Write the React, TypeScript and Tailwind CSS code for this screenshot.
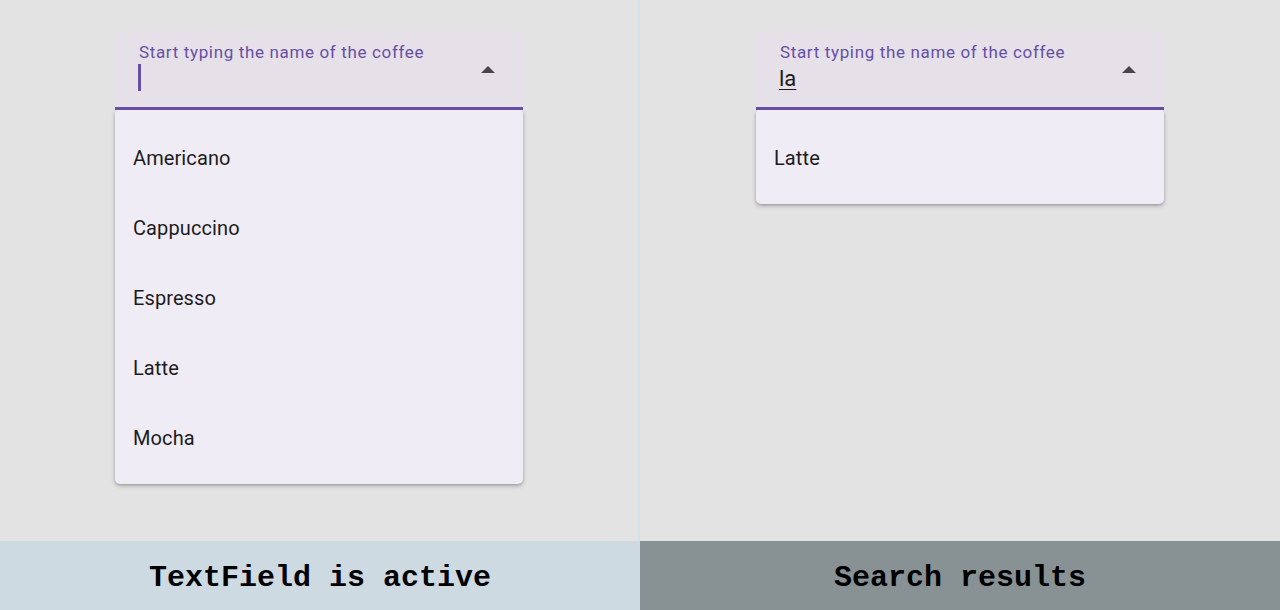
import React from "react";

const Arrow = () => (
  <svg width="14" height="7" viewBox="0 0 14 7" className="block">
    <path d="M0 7 L7 0 L14 7 Z" fill="#49454f" />
  </svg>
);

function Field({ value }: { value?: string }) {
  return (
    <div className="relative h-[80px] w-[408px] rounded-t-[5px] border-b-[3px] border-[#6750a4] bg-[#e6e0e9]">
      <div className="pl-[24px] pt-[11px] text-[17px] leading-[22px] tracking-[0.65px] text-[#6750a4]">
        Start typing the name of the coffee
      </div>
      {value ? (
        <div className="pl-[23px] pt-[3px] text-[22px] leading-[26px] text-[#1d1b20] underline decoration-1 underline-offset-[3px]">
          {value}
        </div>
      ) : (
        <div className="ml-[23px] mt-[1px] h-[27px] w-[3px] bg-[#6750a4]" />
      )}
      <div className="absolute right-[28px] top-[36px]">
        <Arrow />
      </div>
    </div>
  );
}

function Menu({ items }: { items: string[] }) {
  return (
    <div className="w-[408px] rounded-b-[5px] rounded-t-[3px] bg-[#f0ecf6] pb-[11px] pt-[13px] shadow-[0_2px_4px_rgba(0,0,0,0.25),0_1px_2px_rgba(0,0,0,0.1)]">
      {items.map((it) => (
        <div
          key={it}
          className="flex h-[70px] items-center pl-[18px] text-[20px] font-normal tracking-[0.1px] text-[#1d1b20]"
        >
          {it}
        </div>
      ))}
    </div>
  );
}

export default function App() {
  return (
    <div
      className="flex h-[610px] w-[1280px] flex-col bg-[#e3e3e3]"
      style={{ fontFamily: "Roboto, 'Noto Sans', sans-serif" }}
    >
      <div className="flex h-[541px]">
        <div className="flex w-[640px] flex-col items-center border-r-2 border-[#d3e1ea] pt-[30px]">
          <Field />
          <Menu items={["Americano", "Cappuccino", "Espresso", "Latte", "Mocha"]} />
        </div>
        <div className="flex w-[640px] flex-col items-center pt-[30px]">
          <Field value="la" />
          <Menu items={["Latte"]} />
        </div>
      </div>
      <div
        className="flex h-[69px] text-[30px] font-bold text-black"
        style={{ fontFamily: "'Liberation Mono', 'Courier New', monospace" }}
      >
        <div className="flex w-[640px] items-center justify-center bg-[#cddae2] pt-[5px]">
          TextField is active
        </div>
        <div className="flex w-[640px] items-center justify-center bg-[#889194] pt-[5px]">
          Search results
        </div>
      </div>
    </div>
  );
}
